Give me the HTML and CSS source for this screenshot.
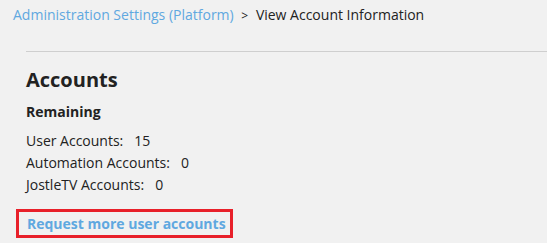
FILE: index.html
```html
<!DOCTYPE html>
<html lang="en">
<head>
    <meta charset="UTF-8">
    <title>View Account Information</title>
    <link rel="stylesheet" href="styles.css">
</head>
<body>
    <div class="breadcrumb">
        <a href="#">Administration Settings (Platform)</a>
        <span class="sep">&gt;</span>
        <span>View Account Information</span>
    </div>

    <main class="content">
        <h1>Accounts</h1>
        <h2>Remaining</h2>
        <ul class="counts">
            <li>User Accounts:<span>15</span></li>
            <li>Automation Accounts:<span>0</span></li>
            <li>JostleTV Accounts:<span>0</span></li>
        </ul>
        <div class="request">
            <a href="#">Request more user accounts</a>
        </div>
    </main>
</body>
</html>
```

FILE: styles.css
```css
*{
    margin: 0;
    padding: 0;
    box-sizing: border-box;
}
body{
    background-color: #f1f1f1;
    font-family: "Open Sans", sans-serif;
    color: #222;
    font-size: 14px;
}
a{
    text-decoration: none;
    color: #5fa8e0;
}
.breadcrumb{
    padding: 5px 13px 0;
    height: 51px;
    line-height: 20px;
    font-size: 14px;
}
.breadcrumb .sep{
    margin: 0 4px;
    font-size: 12px;
}
.content{
    margin-left: 26px;
    border-top: 1px solid #cfcfcf;
    padding-top: 14px;
}
h1{
    font-size: 20px;
    font-weight: 700;
    line-height: 28px;
}
h2{
    font-size: 14px;
    font-weight: 700;
    margin-top: 8px;
    line-height: 20px;
}
.counts{
    list-style: none;
    margin-top: 8px;
}
.counts li{
    line-height: 22px;
}
.counts span{
    margin-left: 11px;
}
.request{
    margin: 13px 0 0 -10px;
    display: inline-block;
    border: 3px solid #e8202a;
    padding: 2px 4px 1px 8px;
}
.request a{
    font-weight: 700;
    line-height: 20px;
}
```
